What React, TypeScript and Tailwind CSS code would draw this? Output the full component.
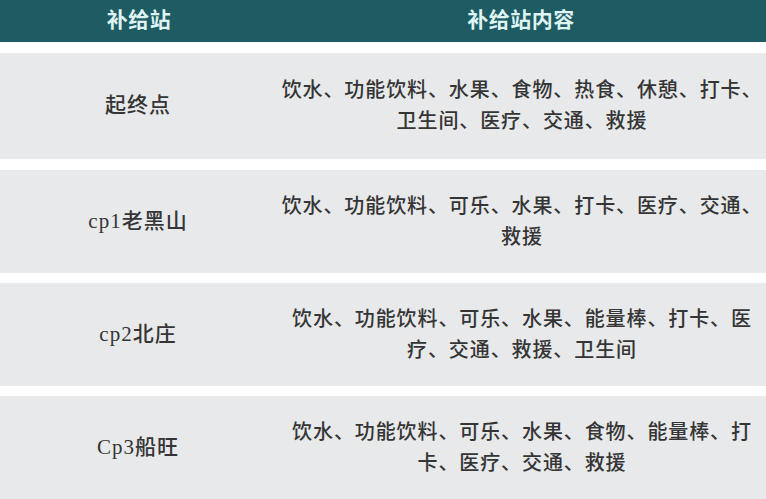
const rows = [
  {
    name: '起终点',
    items: '饮水、功能饮料、水果、食物、热食、休憩、打卡、卫生间、医疗、交通、救援',
    cls: 'mt-[11px] h-[106px]',
  },
  {
    name: 'cp1老黑山',
    items: '饮水、功能饮料、可乐、水果、打卡、医疗、交通、救援',
    cls: 'mt-[11px] h-[103px]',
  },
  {
    name: 'cp2北庄',
    items: '饮水、功能饮料、可乐、水果、能量棒、打卡、医疗、交通、救援、卫生间',
    cls: 'mt-[10px] h-[103px]',
  },
  {
    name: 'Cp3船旺',
    items: '饮水、功能饮料、可乐、水果、食物、能量棒、打卡、医疗、交通、救援',
    cls: 'mt-[10px] h-[103px]',
  },
]

export default function App() {
  return (
    <div
      className="w-[766px] h-[499px] overflow-hidden bg-white"
      style={{ fontFamily: '"Liberation Serif", "Noto Sans CJK SC", serif' }}
    >
      <div className="flex h-[42px] items-center bg-[#1e5b63] text-[21px] font-semibold text-[#def3f2]">
        <div className="w-[276px] pl-[2px] text-center tracking-[0.5px]">补给站</div>
        <div className="flex-1 text-center tracking-[0.5px]">补给站内容</div>
      </div>

      {rows.map((r) => (
        <div key={r.name} className={`flex items-center bg-[#e8e9eb] text-[#353535] ${r.cls}`}>
          <div className="w-[276px] text-center text-[21px] font-medium tracking-[1px]">{r.name}</div>
          <div className="flex-1 pl-[4px] pr-[2px] text-center text-[20px] font-medium leading-[31px] tracking-[0.9px]">
            {r.items}
          </div>
        </div>
      ))}
    </div>
  )
}
